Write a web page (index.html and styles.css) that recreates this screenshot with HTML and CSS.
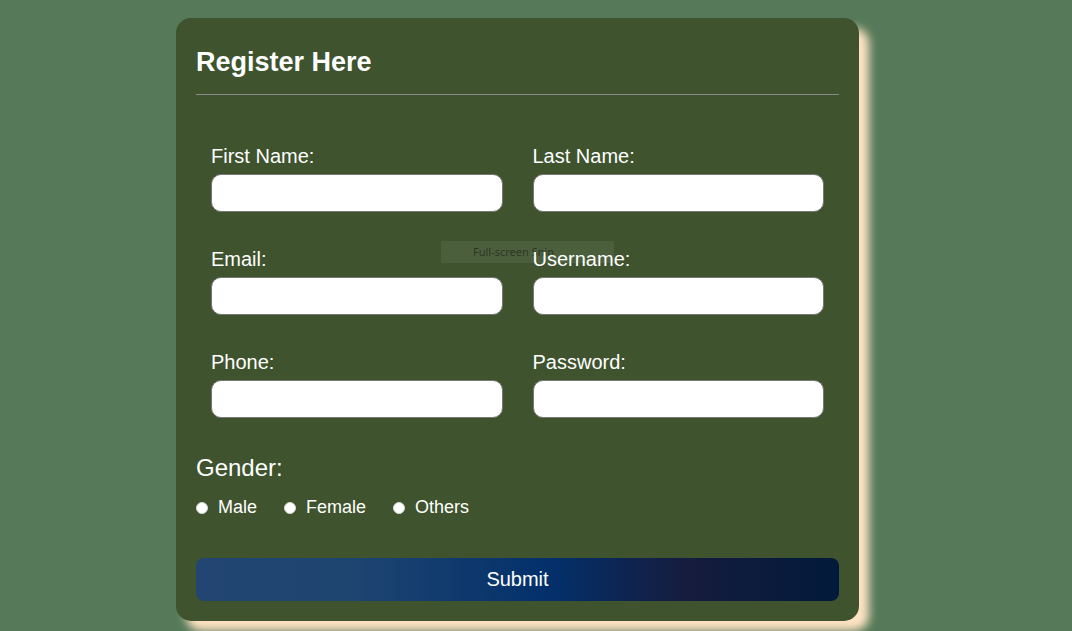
FILE: index.html
```html
<!DOCTYPE html>
<html lang="en">
<head>
  <meta charset="UTF-8" />
  <meta name="viewport" content="width=device-width, initial-scale=1.0" />
  <title>Register Here</title>
  <link rel="stylesheet" href="styles.css">
</head>
<body>
  <div class="card">
    <h2>Register Here</h2>
    <div class="divider"></div>

    <div class="tooltip">Full-screen Snip</div>

    <form class="form" onsubmit="event.preventDefault()">
      <div class="grid">
        <div class="field">
          <label for="firstName">First Name:</label>
          <input type="text" id="firstName" />
        </div>
        <div class="field">
          <label for="lastName">Last Name:</label>
          <input type="text" id="lastName" />
        </div>
        <div class="field">
          <label for="email">Email:</label>
          <input type="email" id="email" />
        </div>
        <div class="field">
          <label for="username">Username:</label>
          <input type="text" id="username" />
        </div>
        <div class="field">
          <label for="phone">Phone:</label>
          <input type="text" id="phone" />
        </div>
        <div class="field">
          <label for="password">Password:</label>
          <input type="password" id="password" />
        </div>
      </div>

      <div class="gender-title">Gender:</div>
      <div class="gender">
        <label class="option"><input type="radio" name="gender" value="male" /> Male</label>
        <label class="option"><input type="radio" name="gender" value="female" /> Female</label>
        <label class="option"><input type="radio" name="gender" value="others" /> Others</label>
      </div>

      <button type="submit" class="submit">Submit</button>
    </form>
  </div>
</body>
</html>
```

FILE: styles.css
```css
html {
  height: 100%;
}
body {
  margin: 0;
  min-height: 100%;
  box-sizing: border-box;
  padding: 18px 0 40px 176px;
  background-color: #557959;
  font-family: "Liberation Sans", Arial, sans-serif;
  color: white;
}
.card {
  position: relative;
  width: 683px;
  box-sizing: border-box;
  padding: 20px;
  background-color: #3e532e;
  border-radius: 15px;
  box-shadow: 10px 10px 10px #ffe4c4;
}
h2 {
  margin: 9px 0 0;
  font-size: 27px;
  line-height: 31px;
  font-weight: bold;
}
.divider {
  margin-top: 16px;
  border-bottom: 1px solid #8a8a8a;
}
.tooltip {
  position: absolute;
  left: 265px;
  top: 223px;
  width: 173px;
  height: 22px;
  box-sizing: border-box;
  padding-left: 32px;
  background-color: rgba(255, 255, 255, 0.07);
  color: rgba(0, 0, 0, 0.45);
  font-family: "Noto Sans", sans-serif;
  font-size: 11px;
  line-height: 22px;
}
.grid {
  position: relative;
  display: grid;
  grid-template-columns: 1fr 1fr;
  column-gap: 30px;
  row-gap: 36px;
  margin-top: 50px;
  padding: 0 15px;
}
.field label {
  display: block;
  font-size: 20px;
  line-height: 23px;
  margin-bottom: 6px;
}
.field input {
  display: block;
  width: 100%;
  height: 38px;
  box-sizing: border-box;
  border: 1px solid #777;
  border-radius: 10px;
  background: white;
  font-size: 16px;
  padding: 0 10px;
}
.gender-title {
  margin-top: 36px;
  font-size: 24px;
  line-height: 28px;
}
.gender {
  display: flex;
  gap: 27px;
  margin-top: 15px;
}
.option {
  display: flex;
  align-items: center;
  gap: 10px;
  font-size: 18px;
  line-height: 21px;
}
.option input {
  appearance: none;
  width: 12px;
  height: 12px;
  margin: 0;
  border-radius: 50%;
  background: white;
  border: 1px solid #d8d8d8;
}
.submit {
  display: block;
  width: 100%;
  height: 43px;
  margin-top: 40px;
  border: none;
  border-radius: 8px;
  color: white;
  font-family: "Liberation Sans", Arial, sans-serif;
  font-size: 20px;
  background: linear-gradient(90deg, #224671 0%, #1e4470 25%, #03306b 55%, #161c3e 76%, #011a3b 100%);
  cursor: pointer;
}
```
